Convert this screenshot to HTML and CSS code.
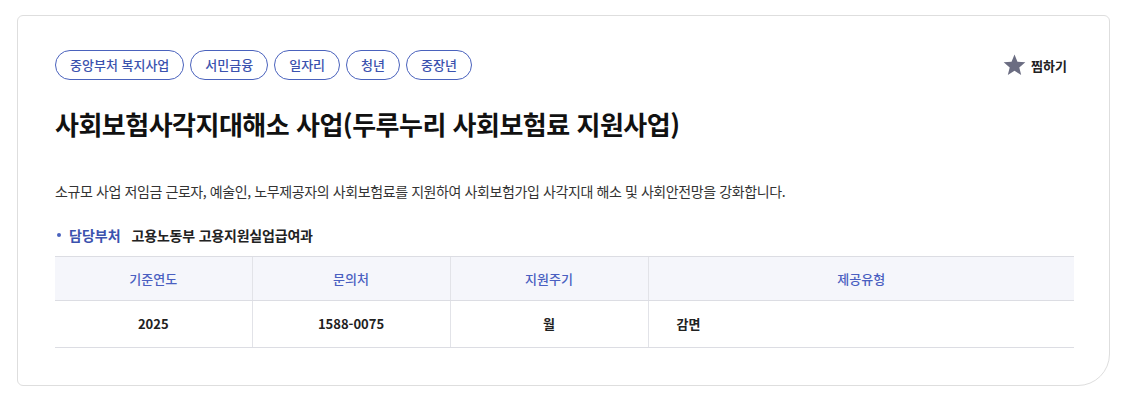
FILE: index.html
```html
<!DOCTYPE html>
<html lang="ko">
<head>
    <meta charset="UTF-8">
    <meta name="viewport" content="width=device-width, initial-scale=1.0">
    <title>사회보험사각지대해소 사업</title>
    <link rel="stylesheet" href="styles.css">
</head>
<body>

    <div class="card">
        <div class="top-row">
            <ul class="tags">
                <li class="tag">중앙부처 복지사업</li>
                <li class="tag">서민금융</li>
                <li class="tag">일자리</li>
                <li class="tag">청년</li>
                <li class="tag">중장년</li>
            </ul>
            <button class="bookmark" type="button">
                <svg class="star" width="23" height="22" viewBox="0 0 24 23" aria-hidden="true">
                    <path d="M12 0.5l3.1 7.6 8.2 0.6-6.3 5.3 2 8-7-4.4-7 4.4 2-8L0.7 8.7l8.2-0.6z" fill="#6b6d82"/>
                </svg>
                찜하기
            </button>
        </div>

        <h1 class="title">사회보험사각지대해소 사업(두루누리 사회보험료 지원사업)</h1>

        <p class="desc">소규모 사업 저임금 근로자, 예술인, 노무제공자의 사회보험료를 지원하여 사회보험가입 사각지대 해소 및 사회안전망을 강화합니다.</p>

        <div class="dept">
            <span class="dept-label">담당부처</span>
            <span class="dept-value">고용노동부 고용지원실업급여과</span>
        </div>

        <table class="info">
            <colgroup>
                <col class="col-narrow first">
                <col class="col-narrow">
                <col class="col-narrow">
                <col>
            </colgroup>
            <thead>
                <tr>
                    <th>기준연도</th>
                    <th>문의처</th>
                    <th>지원주기</th>
                    <th>제공유형</th>
                </tr>
            </thead>
            <tbody>
                <tr>
                    <td>2025</td>
                    <td>1588-0075</td>
                    <td>월</td>
                    <td class="left">감면</td>
                </tr>
            </tbody>
        </table>
    </div>

</body>
</html>
```

FILE: styles.css
```css
body {
    margin: 0;
    padding: 15px 19px 19px 17px;
    font-family: "Noto Sans CJK KR", "Noto Sans", sans-serif;
    color: #222;
    background-color: #fff;
}
.card {
    border: 1px solid #dedede;
    border-radius: 6px 6px 32px 6px; /* big round corner bottom right */
    padding: 34px 35px 37px 37px;
    height: 371px;
    box-sizing: border-box;
}
.top-row {
    display: flex;
    justify-content: space-between;
    align-items: center;
}
.tags {
    display: flex;
    gap: 6px;
    list-style: none;
    margin: 0;
    padding: 0;
}
.tag {
    height: 30px;
    line-height: 28px;
    box-sizing: border-box;
    padding: 0 14px;
    border: 1px solid #4a62bd;
    border-radius: 15px;
    color: #3b52ae;
    font-size: 13px;
    font-weight: 500;
}
.bookmark {
    display: flex;
    align-items: center;
    gap: 5px;
    border: 0;
    background: none;
    padding: 0;
    margin-right: 7px;
    font-family: inherit;
    font-size: 13px;
    font-weight: 700;
    color: #222;
    cursor: pointer;
}
.title {
    margin: 26px 0 0;
    font-size: 26px;
    line-height: 36px;
    font-weight: 700;
    color: #111;
    letter-spacing: -0.5px;
}
.desc {
    margin: 39px 0 0;
    font-size: 14px;
    line-height: 20px;
    color: #333;
    letter-spacing: -0.4px;
}
.dept {
    margin-top: 24px;
    font-size: 14px;
    line-height: 20px;
    font-weight: 700;
    display: flex;
    align-items: center;
}
.dept::before {
    content: "";
    width: 4px;
    height: 4px;
    border-radius: 50%;
    background-color: #4a62bd;
    margin: 0 8px 0 2px;
}
.dept-label {
    color: #3b52ae;
    margin-right: 11px;
}
.dept-value {
    color: #222;
    letter-spacing: -0.2px;
}
.info {
    margin-top: 11px;
    width: 100%;
    border-collapse: collapse;
    table-layout: fixed;
    font-size: 13px;
    line-height: 18px;
}
.col-narrow {
    width: 198px;
}
.col-narrow.first {
    width: 197px;
}
.info th, .info td {
    padding: 0;
    border-top: 1px solid #dcdde3;
    border-bottom: 1px solid #dcdde3;
    border-left: 1px solid #e2e3e8;
    text-align: center;
}
.info th:first-child, .info td:first-child {
    border-left: 0;
}
.info th {
    height: 43px;
    background-color: #f5f6fb;
    color: #4a5fc1;
    font-weight: 500;
}
.info td {
    height: 46px;
    font-weight: 700;
    color: #222;
}
.info td.left {
    text-align: left;
    padding-left: 28px;
}
```
